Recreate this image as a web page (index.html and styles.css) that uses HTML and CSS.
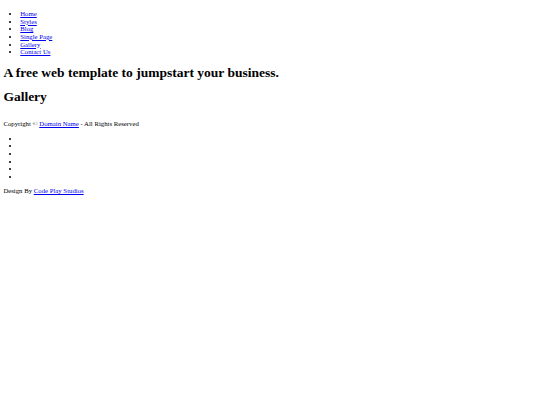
FILE: index.html
```html
<!DOCTYPE html>
<html lang="en">
<head>
<meta charset="utf-8">
<title>Gallery</title>
<link rel="stylesheet" href="styles.css">
</head>
<body>
<ul class="nav">
  <li><a href="#">Home</a></li>
  <li><a href="#">Styles</a></li>
  <li><a href="#">Blog</a></li>
  <li><a href="#">Single Page</a></li>
  <li><a href="#">Gallery</a></li>
  <li><a href="#">Contact Us</a></li>
</ul>
<h1 class="title">A free web template to jumpstart your business.</h1>
<h1 class="title">Gallery</h1>
<footer class="footer">
  <p class="text">Copyright © <a href="#">Domain Name</a> - All Rights Reserved</p>
  <ul class="social">
    <li>&nbsp;</li>
    <li>&nbsp;</li>
    <li>&nbsp;</li>
    <li>&nbsp;</li>
    <li>&nbsp;</li>
    <li>&nbsp;</li>
  </ul>
  <p class="text">Design By <a href="#">Code Play Studios</a></p>
</footer>
</body>
</html>
```
FILE: styles.css
```css
html {
  background: #ffffff;
}
body {
  margin: 3.375px;
  font-family: "Liberation Serif", "Times New Roman", serif;
  font-size: 6.75px;
  line-height: 7.6px;
  color: #000000;
}
a {
  color: #0000ee;
}
.nav,
.social {
  margin: 6.75px 0;
  padding-left: 16.875px;
}
.title {
  font-size: 13.5px;
  line-height: 15.5px;
  margin: 9px 0;
}
.footer {
  display: flow-root;
}
.text {
  margin: 6.75px 0;
}
```
